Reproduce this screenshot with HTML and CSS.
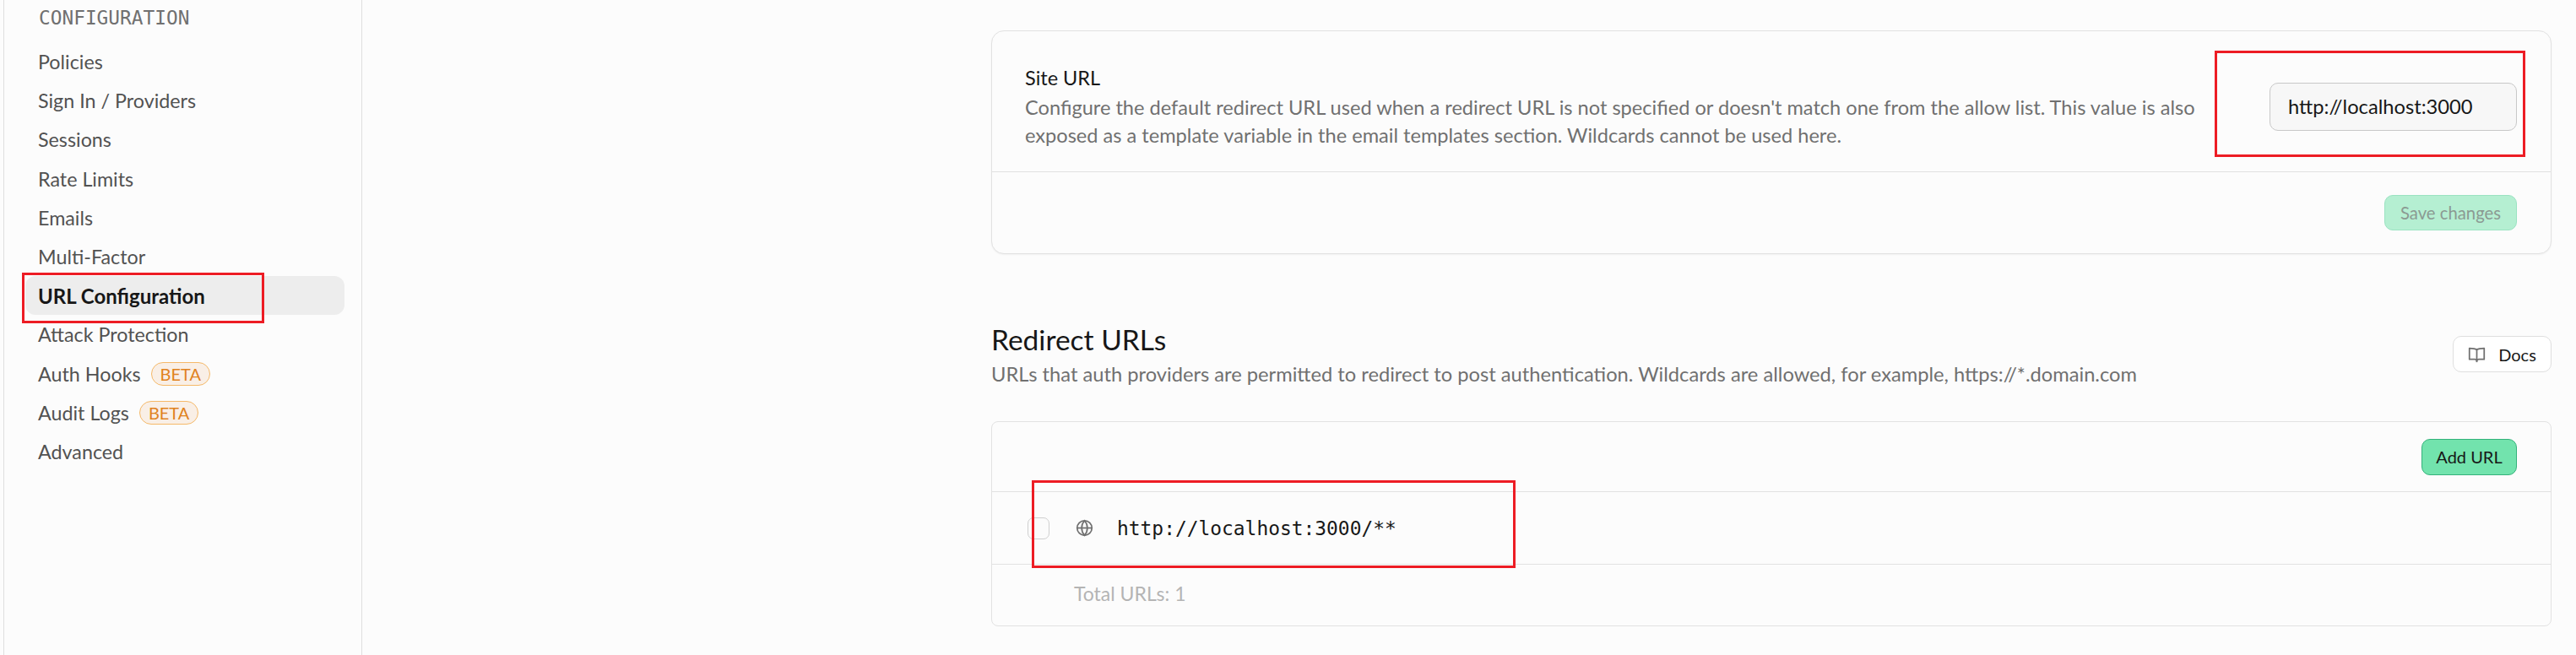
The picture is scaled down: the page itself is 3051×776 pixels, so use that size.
FILE: index.html
```html
<!DOCTYPE html>
<html lang="en">
<head>
  <meta charset="utf-8">
  <title>URL Configuration</title>
  <link rel="stylesheet" href="styles.css">
</head>
<body>

<div class="page">
  <aside class="sidebar">
    <div class="sideTitle">CONFIGURATION</div>
    <a class="sideItem" href="#">Policies</a>
    <a class="sideItem" href="#">Sign In / Providers</a>
    <a class="sideItem" href="#">Sessions</a>
    <a class="sideItem" href="#">Rate Limits</a>
    <a class="sideItem" href="#">Emails</a>
    <a class="sideItem" href="#">Multi-Factor</a>
    <a class="sideItem active" href="#">URL Configuration</a>
    <a class="sideItem" href="#">Attack Protection</a>
    <a class="sideItem" href="#">Auth Hooks <span class="beta">BETA</span></a>
    <a class="sideItem" href="#">Audit Logs <span class="beta">BETA</span></a>
    <a class="sideItem" href="#">Advanced</a>
  </aside>

  <main class="content">
    <section class="card siteCard">
      <div class="siteRow">
        <div class="siteText">
          <div class="siteLabel">Site URL</div>
          <p class="siteDesc">Configure the default redirect URL used when a redirect URL is not specified or doesn't match one from the allow list. This value is also exposed as a template variable in the email templates section. Wildcards cannot be used here.</p>
        </div>
        <div class="siteInput">http://localhost:3000</div>
      </div>
      <div class="siteFoot">
        <a class="btn saveBtn" href="#">Save changes</a>
      </div>
    </section>

    <div class="sectionHead">
      <div>
        <h2 class="sectionTitle">Redirect URLs</h2>
        <p class="sectionDesc">URLs that auth providers are permitted to redirect to post authentication. Wildcards are allowed, for example, https://*.domain.com</p>
      </div>
      <a class="btn docsBtn" href="#">
        <svg class="bookIcon" viewBox="0 0 24 24" fill="none" stroke="#707070" stroke-width="2" stroke-linejoin="round"><path d="M12 6C10 4.5 7 4 2 4v15h7c1.500 0 3 1 3 2.500 0-1.500 1.500-2.500 3-2.500h7V4c-5 0-8 .5-10 2z"/><path d="M12 6v17"/></svg>
        Docs
      </a>
    </div>

    <section class="card urlCard">
      <div class="urlTop">
        <a class="btn addBtn" href="#">Add URL</a>
      </div>
      <div class="urlRow">
        <span class="check"></span>
        <svg class="globeIcon" viewBox="0 0 24 24" fill="none" stroke="#707070" stroke-width="2"><circle cx="12" cy="12" r="10"/><path d="M2 12h20"/><path d="M12 2a15 15 0 0 1 0 20a15 15 0 0 1 0-20z"/></svg>
        <span class="urlText">http://localhost:3000/**</span>
      </div>
      <div class="urlFoot">Total URLs: 1</div>
    </section>
  </main>
</div>

<!-- red annotation boxes -->
<div class="mark markSide"></div>
<div class="mark markInput"></div>
<div class="mark markUrl"></div>

</body>
</html>
```

FILE: styles.css
```css
html, body {
  height: 100%;
}

body {
  margin: 0;
  background: #fcfcfc;
  color: #171717;
  font-family: 'Lato', 'Liberation Sans', sans-serif;
  overflow: hidden;
  position: relative;
}

a {
  color: inherit;
  text-decoration: none;
}

.page {
  display: flex;
  height: 776px;
}

.sidebar {
  box-sizing: border-box;
  width: 425px;
  margin-left: 4px;
  border-left: 1px solid #dfdfdf;
  border-right: 1px solid #dfdfdf;
  padding-left: 25px;
  padding-right: 20px;
  flex-shrink: 0;
}

.sideTitle {
  font-family: 'DejaVu Sans Mono', monospace;
  font-size: 22.8px;
  line-height: 42px;
  height: 50px;
  color: #707070;
  padding-left: 16px;
}

.sideItem {
  display: flex;
  align-items: center;
  box-sizing: border-box;
  height: 46.2px;
  padding-left: 15px;
  font-size: 23.3px;
  color: #525252;
  border-radius: 12px;
}

.sideItem.active {
  background: #ededed;
  color: #171717;
  font-size: 24px;
  font-weight: 700;
}

.beta {
  display: inline-block;
  box-sizing: border-box;
  margin-left: 12px;
  padding: 0 10px;
  height: 28px;
  line-height: 26px;
  font-size: 20px;
  color: #e0821e;
  background: #f9efe6;
  border: 1px solid #f5b969;
  border-radius: 14px;
}

.content {
  flex: 1;
  padding: 36px 29px 0 745px;
}

.card {
  box-sizing: border-box;
  border: 1px solid #e2e2e2;
  background: #fcfcfc;
}

.siteCard {
  height: 265px;
  border-radius: 15px;
  box-shadow: 0 1px 2px rgba(0, 0, 0, 0.05);
}

.siteRow {
  display: flex;
  justify-content: space-between;
  align-items: center;
  box-sizing: border-box;
  height: 167px;
  padding: 13px 40px 0 39px;
  border-bottom: 1px solid #e2e2e2;
}

.siteText {
  width: 1420px;
}

.siteLabel {
  font-size: 23.5px;
  line-height: 32px;
  color: #171717;
}

.siteDesc {
  margin: 3px 0 0;
  font-size: 23.6px;
  line-height: 33px;
  color: #707070;
}

.siteInput {
  box-sizing: border-box;
  width: 293px;
  height: 57px;
  line-height: 54px;
  padding-left: 21px;
  font-size: 23.7px;
  color: #171717;
  background: #f7f7f7;
  border: 1px solid #c8c8c8;
  border-radius: 10px;
}

.siteFoot {
  display: flex;
  justify-content: flex-end;
  padding: 27px 40px 0 0;
}

.btn {
  display: flex;
  align-items: center;
  justify-content: center;
  box-sizing: border-box;
  border-radius: 10px;
}

.saveBtn {
  width: 157px;
  height: 42px;
  font-size: 20.3px;
  color: #8b9a92;
  background: #b5efd2;
  border: 1px solid #9be3c2;
}

.sectionHead {
  display: flex;
  justify-content: space-between;
  align-items: flex-start;
  margin-top: 79px;
  height: 119px;
}

.sectionTitle {
  margin: 0;
  font-size: 33.5px;
  line-height: 44px;
  font-weight: 400;
  color: #171717;
}

.sectionDesc {
  margin: 0;
  font-size: 23.7px;
  line-height: 38px;
  color: #707070;
}

.docsBtn {
  margin-top: 18px;
  width: 117px;
  height: 43px;
  gap: 15px;
  font-size: 20px;
  background: #fff;
  border: 1px solid #dfdfdf;
}

.bookIcon {
  width: 21px;
  height: 21px;
}

.urlCard {
  height: 243px;
  border-radius: 8px;
}

.urlTop {
  display: flex;
  justify-content: flex-end;
  align-items: center;
  box-sizing: border-box;
  height: 83px;
  padding-right: 40px;
  border-bottom: 1px solid #e2e2e2;
}

.addBtn {
  width: 113px;
  height: 43px;
  font-size: 20px;
  background: #72e3ad;
  border: 1px solid #34b27b;
}

.urlRow {
  display: flex;
  align-items: center;
  box-sizing: border-box;
  height: 86px;
  padding-left: 42px;
  border-bottom: 1px solid #e2e2e2;
}

.check {
  box-sizing: border-box;
  width: 26px;
  height: 26px;
  border: 1px solid #cfcfcf;
  border-radius: 7px;
  background: #fbfbfb;
}

.globeIcon {
  width: 21px;
  height: 21px;
  margin-left: 31px;
}

.urlText {
  margin-left: 28px;
  font-family: 'DejaVu Sans Mono', monospace;
  font-size: 22.9px;
  color: #171717;
}

.urlFoot {
  padding: 20px 0 0 97px;
  font-size: 23px;
  color: #b4b4b4;
}

.mark {
  position: absolute;
  box-sizing: border-box;
  border: 3px solid #ed1c24;
}

.markSide {
  left: 26px;
  top: 323px;
  width: 287px;
  height: 60px;
}

.markInput {
  left: 2623px;
  top: 60px;
  width: 368px;
  height: 126px;
}

.markUrl {
  left: 1222px;
  top: 569px;
  width: 573px;
  height: 104px;
}
```
